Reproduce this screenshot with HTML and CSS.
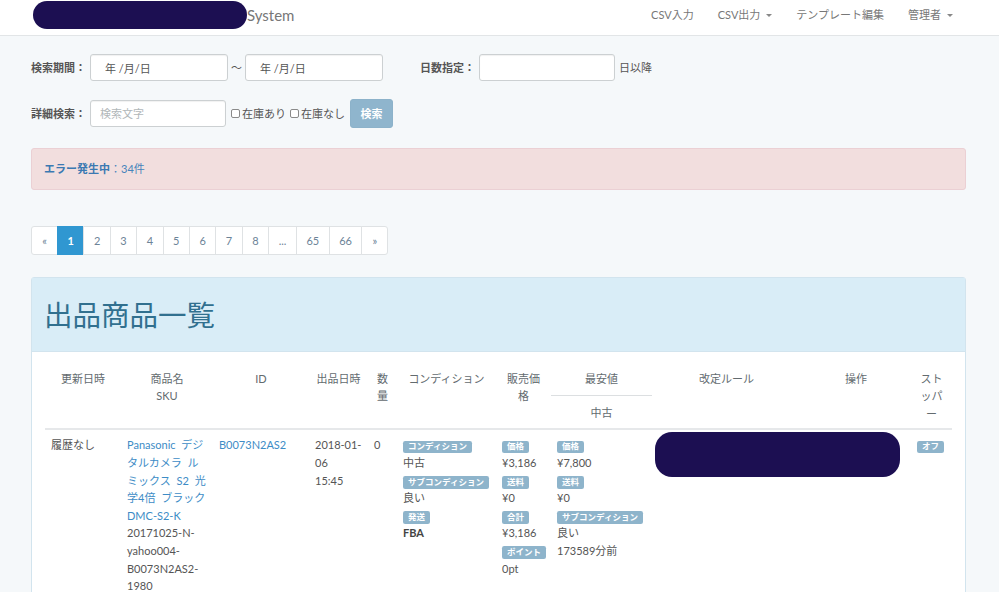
FILE: index.html
```html
<!DOCTYPE html>
<html lang="ja">
<head>
<meta charset="utf-8">
<title>System</title>
<link rel="stylesheet" href="styles.css">
</head>
<body>
<nav class="navbar">
  <div class="navbar-inner">
    <a class="brand" href="#"><span class="brand-mask"></span>System</a>
    <ul class="nav-links">
      <li><a href="#">CSV入力</a></li>
      <li><a href="#">CSV出力<span class="caret"></span></a></li>
      <li><a href="#">テンプレート編集</a></li>
      <li><a href="#">管理者<span class="caret"></span></a></li>
    </ul>
  </div>
</nav>

<main class="container">
  <form class="search">
    <div class="form-row">
      <label class="control-label">検索期間：</label>
      <input class="form-control date" type="text" value="年 /月/日">
      <span class="tilde">〜</span>
      <input class="form-control date" type="text" value="年 /月/日">
      <label class="control-label days-label">日数指定：</label>
      <input class="form-control days" type="text">
      <span class="suffix">日以降</span>
    </div>
    <div class="form-row row-2">
      <label class="control-label">詳細検索：</label>
      <input class="form-control keyword" type="text" placeholder="検索文字">
      <label class="check"><input type="checkbox"><span>在庫あり</span></label>
      <label class="check"><input type="checkbox"><span>在庫なし</span></label>
      <button class="btn" type="button">検索</button>
    </div>
  </form>

  <div class="alert"><a href="#"><strong>エラー発生中</strong>：34件</a></div>

  <ul class="pagination">
    <li><a href="#">«</a></li>
    <li class="active"><a href="#">1</a></li>
    <li><a href="#">2</a></li>
    <li><a href="#">3</a></li>
    <li><a href="#">4</a></li>
    <li><a href="#">5</a></li>
    <li><a href="#">6</a></li>
    <li><a href="#">7</a></li>
    <li><a href="#">8</a></li>
    <li><a href="#">...</a></li>
    <li><a href="#">65</a></li>
    <li><a href="#">66</a></li>
    <li><a href="#">»</a></li>
  </ul>

  <section class="panel">
    <div class="panel-heading"><h1>出品商品一覧</h1></div>
    <div class="panel-body">
      <table class="items">
        <colgroup>
          <col class="c-upd"><col class="c-name"><col class="c-id"><col class="c-date"><col class="c-qty"><col class="c-cond"><col class="c-price"><col class="c-min"><col class="c-rule"><col class="c-ops"><col class="c-stop">
        </colgroup>
        <thead>
          <tr>
            <th rowspan="2">更新日時</th>
            <th rowspan="2">商品名<br>SKU</th>
            <th rowspan="2">ID</th>
            <th rowspan="2">出品日時</th>
            <th rowspan="2">数量</th>
            <th rowspan="2">コンディション</th>
            <th rowspan="2">販売価格</th>
            <th>最安値</th>
            <th rowspan="2">改定ルール</th>
            <th rowspan="2">操作</th>
            <th rowspan="2">ストッパー</th>
          </tr>
          <tr class="sub">
            <th>中古</th>
          </tr>
        </thead>
        <tbody>
          <tr>
            <td>履歴なし</td>
            <td><a class="product" href="#">Panasonic デジタルカメラ ルミックス S2 光学4倍 ブラック DMC-S2-K</a><br>20171025-N-<wbr>yahoo004-<wbr>B0073N2AS2-<wbr>1980</td>
            <td><a href="#">B0073N2AS2</a></td>
            <td>2018-01-<wbr>06<br>15:45</td>
            <td>0</td>
            <td>
              <div><span class="label">コンディション</span></div>
              <div>中古</div>
              <div><span class="label">サブコンディション</span></div>
              <div>良い</div>
              <div><span class="label">発送</span></div>
              <div><strong>FBA</strong></div>
            </td>
            <td>
              <div><span class="label">価格</span></div>
              <div>¥3,186</div>
              <div><span class="label">送料</span></div>
              <div>¥0</div>
              <div><span class="label">合計</span></div>
              <div>¥3,186</div>
              <div><span class="label">ポイント</span></div>
              <div>0pt</div>
            </td>
            <td>
              <div><span class="label">価格</span></div>
              <div>¥7,800</div>
              <div><span class="label">送料</span></div>
              <div>¥0</div>
              <div><span class="label">サブコンディション</span></div>
              <div>良い</div>
              <div>173589分前</div>
            </td>
            <td><div class="rule-mask"></div></td>
            <td></td>
            <td><span class="label">オフ</span></td>
          </tr>
        </tbody>
      </table>
    </div>
  </section>
</main>
</body>
</html>
```

FILE: styles.css
```css
* { box-sizing: border-box; }

body {
  margin: 0;
  background: #f5f8fa;
  font-family: "Lato", "Noto Sans CJK JP", sans-serif;
  font-size: 11px;
  line-height: 1.6;
  color: #636b6f;
}

a { text-decoration: none; }

/* navbar */
.navbar {
  background: #fff;
  border-bottom: 1px solid #e2e5e7;
  height: 36px;
}
.navbar-inner {
  width: 935px;
  margin-left: 31px;
  height: 30px;
  display: flex;
  align-items: center;
  justify-content: space-between;
}
.brand {
  display: flex;
  align-items: center;
  margin-left: 2px;
  font-size: 15px;
  color: #777;
}
.brand-mask {
  width: 214px;
  height: 28px;
  border-radius: 14px;
  background: #1c0f52;
}
.nav-links {
  display: flex;
  list-style: none;
  margin: 0 1px 0 0;
  padding: 0;
}
.nav-links a {
  display: flex;
  align-items: center;
  padding: 0 12px;
  color: #777;
}
.caret {
  width: 0;
  height: 0;
  margin-left: 6px;
  border-top: 3px solid #888;
  border-left: 3px solid transparent;
  border-right: 3px solid transparent;
}

/* layout */
.container {
  width: 935px;
  margin-left: 31px;
  padding-top: 18px;
}

/* search form */
.form-row {
  display: flex;
  align-items: center;
  height: 27px;
}
.form-row.row-2 {
  height: 29px;
  margin-top: 18px;
}
.control-label {
  font-weight: bold;
  color: #555;
  margin-right: 4px;
}
.form-control {
  height: 27px;
  border: 1px solid #ccd0d2;
  border-radius: 3px;
  background: #fff;
  box-shadow: inset 0 1px 1px rgba(0, 0, 0, .06);
  font: inherit;
  color: #555;
  padding: 0 9px;
}
.form-control::placeholder { color: #b1b7ba; }
.date { width: 138px; padding-left: 14px; }
.tilde { margin: 0 3px; color: #555; }
.days-label { margin-left: 37px; }
.days { width: 136px; }
.suffix { margin-left: 4px; color: #555; }
.keyword { width: 136px; }
.check {
  display: flex;
  align-items: center;
  color: #555;
  margin-left: 5px;
}
.check + .check { margin-left: 4px; }
.check input {
  appearance: none;
  width: 9px;
  height: 9px;
  margin: 0 2px 0 0;
  border: 1px solid #8a8a8a;
  border-radius: 2px;
  background: #fff;
}
.btn {
  margin-left: 5px;
  width: 43px;
  height: 29px;
  border: 1px solid #8cb2ca;
  border-radius: 3px;
  background: #8fb5cd;
  color: #fff;
  font: inherit;
  font-weight: bold;
}

/* alert */
.alert {
  margin-top: 20px;
  padding: 11px 12px;
  background: #f2dede;
  border: 1px solid #ebd0d4;
  border-radius: 3px;
}
.alert a { color: #4684bb; }
.alert strong { color: #3b79b2; }

/* pagination */
.pagination {
  display: flex;
  list-style: none;
  margin: 36px 0 0;
  padding: 0;
}
.pagination a {
  display: block;
  height: 29px;
  line-height: 27px;
  padding: 0 9.5px;
  margin-left: -1px;
  min-width: 27px;
  text-align: center;
  border: 1px solid #dfe2e4;
  background: #fff;
  color: #6d8397;
}
.pagination li:first-child a {
  margin-left: 0;
  border-radius: 3px 0 0 3px;
}
.pagination li:last-child a { border-radius: 0 3px 3px 0; }
.pagination .active a {
  background: #3097d1;
  border-color: #3097d1;
  color: #fff;
  font-weight: bold;
}

/* panel */
.panel {
  margin-top: 22px;
  border: 1px solid #d2e4ee;
  border-radius: 3px;
  background: #fff;
}
.panel-heading {
  height: 74px;
  display: flex;
  align-items: center;
  padding: 3px 13px 0 12px;
  background: #d9edf7;
  border-bottom: 1px solid #d2e4ee;
}
.panel-heading h1 {
  margin: 0;
  font-size: 28.5px;
  font-weight: normal;
  line-height: 1.1;
  color: #31708f;
}
.panel-body { padding: 12px 13px 20px; }

/* table */
.items {
  width: 100%;
  table-layout: fixed;
  border-collapse: collapse;
}
.c-upd { width: 76px; }
.c-name { width: 92px; }
.c-id { width: 96px; }
.c-date { width: 59px; }
.c-qty { width: 29px; }
.c-cond { width: 99px; }
.c-price { width: 55px; }
.c-min { width: 101px; }
.c-rule { width: 149px; }
.c-ops { width: 110px; }
.items th {
  padding: 6px;
  font-weight: normal;
  text-align: center;
  vertical-align: top;
  color: #636b6f;
}
.items .sub th {
  border-top: 1px solid #dcdfe1;
  vertical-align: middle;
}
.items td {
  padding: 6px;
  vertical-align: top;
  color: #555;
  border-top: 2px solid #e6e8ea;
}
.items td a { color: #3d8cc6; }
.items .product { word-spacing: 3px; }
.items strong { color: #444; }

.label {
  display: inline-block;
  padding: .2em .6em .3em;
  font-size: 8.5px;
  font-weight: bold;
  line-height: 1;
  color: #fff;
  background: #8eb4cb;
  border-radius: .25em;
  white-space: nowrap;
}

.rule-mask {
  width: 245px;
  height: 45px;
  margin: -4px 0 0 -3px;
  border-radius: 17px;
  background: #1c0f52;
}
```
